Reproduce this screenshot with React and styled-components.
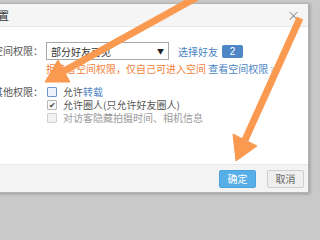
import React from 'react'
import styled, {createGlobalStyle} from 'styled-components'

// ====================== STYLED COMPONENTS ======================
const GlobalStyle = createGlobalStyle`
  html, body {
    margin: 0;
    padding: 0;
    background: #c9c9c9;
    overflow: hidden;
  }
  body {
    width: 320px;
    height: 240px;
    font-family: 'Noto Sans CJK SC', 'Liberation Sans', sans-serif;
  }
`

const Stage = styled.div`
  position: relative;
  width: 320px;
  height: 240px;
  padding-top: 3px;
  box-sizing: border-box;
`

const Dialog = styled.div`
  margin-left: -40px;
  width: 349px;
  background: #fff;
  border: 1px solid #b5b5b5;
  border-top: none;
  border-left: none;
  box-shadow: 1px 1px 3px rgba(0, 0, 0, 0.25);
  box-sizing: border-box;
`

const TitleBar = styled.div`
  height: 24px;
  background: #f5f5f5;
  border-bottom: 1px solid #e6e6e6;
  border-top: 1px solid #b5b5b5;
  box-sizing: border-box;
  display: flex;
  align-items: center;
  justify-content: space-between;
  padding: 0 8px 0 5px;
`

const Title = styled.span`
  font-size: 11px;
  color: #333;
`

const Close = styled.span`
  font-size: 13px;
  line-height: 1;
  color: #8a8a8a;
  margin-top: -2px;
`

const Body = styled.div`
  height: 137px;
  box-sizing: border-box;
  padding: 15px 0 0 20px;
  display: grid;
  grid-template-columns: 63px 1fr;
  grid-auto-rows: min-content;
  column-gap: 3px;
  font-size: 10px;
  color: #444;
`

const Label = styled.div`
  text-align: right;
  color: #555;
  line-height: ${p => p.$lh}px;
  margin-top: ${p => p.$mt || 0}px;
  white-space: nowrap;
`

const Line = styled.div`
  display: flex;
  align-items: center;
  white-space: nowrap;
`

const Select = styled.div`
  width: 123px;
  height: 18px;
  box-sizing: border-box;
  border: 1px solid #a8a8a8;
  display: flex;
  align-items: center;
  justify-content: space-between;
  padding: 0 4px 0 4px;
  color: #333;
`

const Caret = styled.span`
  font-size: 7px;
  color: #222;
`

const Link = styled.span`
  color: ${p => p.$color || '#4a84c4'};
  margin-left: ${p => p.$ml || 0}px;
`

const Badge = styled.span`
  display: inline-flex;
  align-items: center;
  justify-content: center;
  width: 21px;
  height: 13px;
  border-radius: 2px;
  background: #4f87c6;
  color: #fff;
  font-size: 10px;
  margin-left: 4px;
  font-family: 'Liberation Sans', sans-serif;
`

const Hint = styled.div`
  grid-column: 2;
  line-height: 14px;
  margin-top: 2px;
  color: #f3823a;
  white-space: nowrap;
`

const Checks = styled.div`
  display: flex;
  flex-direction: column;
  margin-top: 9px;
`

const CheckRow = styled.label`
  display: flex;
  align-items: center;
  height: 13px;
  line-height: 13px;
  color: ${p => (p.$disabled ? '#9a9a9a' : '#555')};
`

const Box = styled.span`
  width: 8px;
  height: 8px;
  margin-left: 1px;
  border: 1px solid ${p => p.$border};
  background: ${p => p.$bg};
  border-radius: 1px;
  display: inline-flex;
  align-items: center;
  justify-content: center;
  font-size: 8px;
  line-height: 1;
  color: #444;
  margin-right: 6px;
`

const Footer = styled.div`
  height: 28px;
  background: #f3f3f3;
  border-top: 1px solid #e8e8e8;
  box-sizing: border-box;
  display: flex;
  align-items: center;
  justify-content: flex-end;
  gap: 11px;
  padding-right: 4px;
`

const Button = styled.button`
  width: 37px;
  height: 18px;
  padding: 0;
  font-family: inherit;
  font-size: 10px;
  line-height: 16px;
  border-radius: 2px;
  border: 1px solid ${p => (p.$primary ? '#4aa3df' : '#cfcfcf')};
  background: ${p => (p.$primary ? '#58aee6' : '#efefef')};
  color: ${p => (p.$primary ? '#fff' : '#666')};
`

const Overlay = styled.svg`
  position: absolute;
  left: 0;
  top: 0;
  pointer-events: none;
`
// ===============================================================

const arrows = [
  {from: [201, -5], base: [64, 71], tip: [45, 82], a: [70, 82], b: [58, 60]},
  {from: [300, 18], base: [245, 140], tip: [236, 161], a: [257, 146], b: [233, 134]},
]

export default function App() {
  return (
    <Stage>
      <GlobalStyle />
      <Dialog>
        <TitleBar>
          <Title>权限设置</Title>
          <Close>×</Close>
        </TitleBar>
        <Body>
          <Label $lh={18}>空间权限：</Label>
          <Line>
            <Select>
              <span>部分好友可见</span>
              <Caret>▼</Caret>
            </Select>
            <Link $ml={9}>选择好友</Link>
            <Badge>2</Badge>
          </Line>
          <Hint>
            拒绝者空间权限，仅自己可进入空间 <Link>查看空间权限</Link>
            <Link $color="#8aa6c8"> &gt;</Link>
          </Hint>
          <Label $lh={13} $mt={9}>其他权限：</Label>
          <Checks>
            <CheckRow>
              <Box $border="#6f95d2" $bg="#eef3fb" />
              允许<Link>转载</Link>
            </CheckRow>
            <CheckRow>
              <Box $border="#b8b8b8" $bg="#f7f7f7">✔</Box>
              允许圈人(只允许好友圈人)
            </CheckRow>
            <CheckRow $disabled>
              <Box $border="#cfcfcf" $bg="#f2f2f2" />
              对访客隐藏拍摄时间、相机信息
            </CheckRow>
          </Checks>
        </Body>
        <Footer>
          <Button $primary>确定</Button>
          <Button>取消</Button>
        </Footer>
      </Dialog>
      <Overlay width="320" height="240" viewBox="0 0 320 240">
        {arrows.map((r, i) => (
          <g key={i} fill="#fa9a50" stroke="#fa9a50">
            <line
              x1={r.from[0]}
              y1={r.from[1]}
              x2={r.base[0]}
              y2={r.base[1]}
              strokeWidth="7"
            />
            <polygon
              points={`${r.tip.join(',')} ${r.a.join(',')} ${r.b.join(',')}`}
              strokeWidth="1"
              strokeLinejoin="round"
            />
          </g>
        ))}
      </Overlay>
    </Stage>
  )
}
